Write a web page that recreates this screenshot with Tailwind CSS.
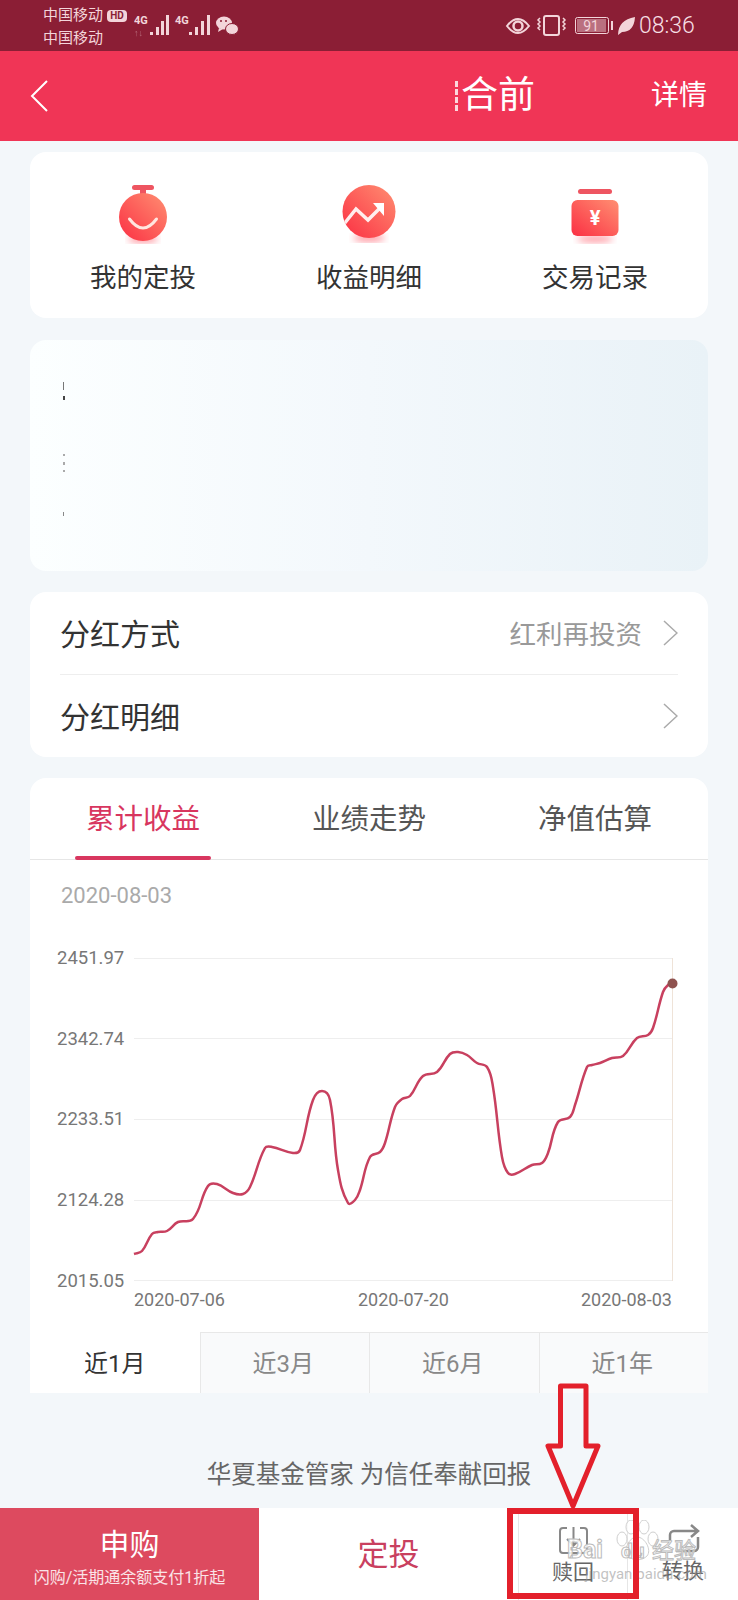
<!DOCTYPE html>
<html lang="zh-CN">

<head>
  <meta charset="UTF-8">
  <meta name="viewport" content="width=device-width, initial-scale=1.0">
  <title>基金详情</title>
  <script src="https://cdn.jsdelivr.net/npm/@tailwindcss/browser@4"></script>
</head>

<body class="bg-[#f3f7fa] font-['Roboto','Noto_Sans_CJK_SC',sans-serif] text-[#333333]">
  <div class="relative w-[738px] h-[1600px] overflow-hidden flex flex-col">

    <!-- status bar -->
    <div class="h-[51px] shrink-0 bg-[#8b1e35] flex items-center text-[#f3d5da] pl-[43px]">
      <div class="w-[84px] flex flex-col text-[15px] leading-[23px] pt-[3px]">
        <div class="flex items-center gap-[4px]">
          <span>中国移动</span>
          <span class="w-[20px] h-[12px] rounded-[4px] bg-[#f3d5da] text-[#8b1e35] text-[10px] leading-[12px] font-bold text-center">HD</span>
        </div>
        <span>中国移动</span>
      </div>
      <svg class="ml-[7px]" width="106" height="51" viewBox="134 0 106 51" fill="#f3d5da">
        <text x="134" y="24" font-size="11" font-weight="700" font-family="Roboto">4G</text>
        <text x="134" y="36" font-size="9" font-weight="700" font-family="Roboto" opacity="0.4">↑↓</text>
        <rect x="150" y="32" width="3" height="3" /><rect x="156" y="27" width="3" height="8" />
        <rect x="161" y="21" width="3" height="14" /><rect x="166" y="15" width="3" height="20" />
        <text x="175" y="24" font-size="11" font-weight="700" font-family="Roboto">4G</text>
        <rect x="189" y="32" width="3" height="3" /><rect x="195" y="27" width="3" height="8" />
        <rect x="201" y="21" width="3" height="14" /><rect x="207" y="15" width="3" height="20" />
        <ellipse cx="224" cy="23" rx="8" ry="6.500" /><path d="M219 28 l-1 4 5 -3z" />
        <ellipse cx="232" cy="29" rx="6.500" ry="5.500" stroke="#8b1e35" stroke-width="1" />
        <circle cx="221" cy="21" r="1" fill="#8b1e35" /><circle cx="226" cy="21" r="1" fill="#8b1e35" />
      </svg>
      <svg class="ml-auto" width="132" height="51" viewBox="505 0 132 51" fill="none" stroke="#f3d5da">
        <path d="M507 26 Q518 12 529 26 Q518 40 507 26Z" stroke-width="2" />
        <circle cx="518" cy="26" r="4.500" stroke-width="2.500" />
        <rect x="544" y="16" width="15" height="19" rx="2" stroke-width="2" />
        <path d="M540 18 l-2 2 2 2 -2 2 2 2 -2 2 2 2 M563 18 l2 2 -2 2 2 2 -2 2 2 2 -2 2" stroke-width="1.500" />
        <rect x="575.500" y="17.500" width="33" height="16" rx="2" stroke-width="1" />
        <rect x="577" y="19" width="29" height="13" fill="#f3d5da" fill-opacity="0.45" stroke="none" />
        <text x="591" y="31" text-anchor="middle" font-size="14" font-family="Roboto" fill="#f3d5da" stroke="none">91</text>
        <rect x="611" y="21" width="2" height="9" fill="#f3d5da" stroke="none" />
        <path d="M618 35 Q618 20 635 17 Q634 32 622 32 L618 35Z" fill="#f3d5da" stroke="none" />
      </svg>
      <span class="ml-[2px] mr-[43px] w-[56px] text-[23px] leading-[51px] font-light text-[#f6dfe3]">08:36</span>
    </div>

    <!-- header -->
    <div class="h-[90px] shrink-0 bg-[#f03556] flex items-center text-white">
      <svg class="ml-[30px]" width="18" height="32" viewBox="0 0 18 32" fill="none" stroke="#ffffff" stroke-width="2">
        <path d="M17 1 L2 16 L17 31" />
      </svg>
      <span class="ml-auto mr-[116px] flex items-center text-[37px] leading-[50px]">
        <span class="mr-[3px] w-[3px] h-[30px] border-l-[3px] border-dashed border-white/80"></span>合前
      </span>
      <span class="mr-[31px] text-[28px] leading-[40px]">详情</span>
    </div>

    <!-- shortcuts -->
    <div class="mt-[11px] mx-[30px] h-[166px] shrink-0 rounded-[16px] bg-white grid grid-cols-3 pt-[31px] text-[26.500px] leading-[36px] text-center">
      <div class="flex flex-col items-center">
        <svg width="70" height="66" viewBox="0 0 70 66">
          <defs>
            <linearGradient id="redGrad" x1="1" y1="0" x2="0" y2="1">
              <stop offset="0" stop-color="#ff8f72" />
              <stop offset="1" stop-color="#fb2f43" />
            </linearGradient>
            <filter id="soft"><feGaussianBlur stdDeviation="3.500" /></filter>
          </defs>
          <ellipse cx="35" cy="56" rx="15" ry="4" fill="#ff9aa3" filter="url(#soft)" />
          <rect x="24" y="2" width="22" height="5" rx="2.500" fill="#ee5561" />
          <rect x="32" y="7" width="6" height="5" fill="#ee5561" />
          <circle cx="35" cy="34" r="24" fill="url(#redGrad)" />
          <path d="M21.500 36 Q35 54 48.500 36" fill="none" stroke="#ffe6df" stroke-width="3" stroke-linecap="round" />
        </svg>
        <span class="mt-[11px]">我的定投</span>
      </div>
      <div class="flex flex-col items-center">
        <svg width="70" height="66" viewBox="0 0 70 66">
          <defs>
            <clipPath id="ball"><circle cx="35" cy="28.500" r="26.500" /></clipPath>
          </defs>
          <ellipse cx="35" cy="55" rx="16" ry="4" fill="#ff9aa3" filter="url(#soft)" />
          <circle cx="35" cy="28.500" r="26.500" fill="url(#redGrad)" />
          <g clip-path="url(#ball)">
            <path d="M10 41 L22 26 L34 37 L46 25" fill="none" stroke="#ffffff" stroke-opacity="0.9" stroke-width="3.500" />
            <polygon points="39,20 50,20 50,33" fill="#ffffff" />
          </g>
        </svg>
        <span class="mt-[11px]">收益明细</span>
      </div>
      <div class="flex flex-col items-center">
        <svg width="70" height="66" viewBox="0 0 70 66">
          <ellipse cx="35" cy="56" rx="18" ry="3.500" fill="#ff9aa3" filter="url(#soft)" />
          <rect x="18" y="6" width="34" height="5" rx="2.500" fill="#ee5561" />
          <rect x="11.500" y="17" width="47" height="36" rx="6" fill="url(#redGrad)" />
          <text x="35" y="42" text-anchor="middle" font-size="20" font-weight="700" font-family="Roboto" fill="#ffffff">¥</text>
        </svg>
        <span class="mt-[11px]">交易记录</span>
      </div>
    </div>

    <!-- blanked out holdings card -->
    <div class="mt-[22px] mx-[30px] h-[231px] shrink-0 rounded-[16px] bg-linear-to-r from-[#fcffff] via-[#f3f8fc] to-[#e9f2f7] pt-[42px] pl-[33px] flex flex-col items-start">
      <div class="w-[1px] h-[8px] bg-[#777777]"></div>
      <div class="mt-[6px] w-[2px] h-[4px] bg-[#444444]"></div>
      <div class="mt-[54px] w-[2px] h-[2px] bg-[#aaaaaa]"></div>
      <div class="mt-[6px] w-[2px] h-[3px] bg-[#aaaaaa]"></div>
      <div class="mt-[5px] w-[2px] h-[2px] bg-[#aaaaaa]"></div>
      <div class="mt-[40px] w-[1px] h-[4px] bg-[#888888]"></div>
    </div>

    <!-- dividend rows -->
    <div class="mt-[21px] mx-[30px] h-[165px] shrink-0 rounded-[16px] bg-white px-[30px] text-[30px]">
      <div class="h-[83px] pt-[3px] border-b border-[#eeeeee] flex items-center">
        <span>分红方式</span>
        <span class="ml-auto text-[26.500px] text-[#999999]">红利再投资</span>
        <svg class="ml-[21px] -mt-[3px]" width="15" height="26" viewBox="0 0 15 26" fill="none" stroke="#aaaaaa" stroke-width="1.500">
          <path d="M1 1 L14 13 L1 25" />
        </svg>
      </div>
      <div class="h-[82px] pt-[3px] flex items-center">
        <span>分红明细</span>
        <svg class="ml-auto -mt-[3px]" width="15" height="26" viewBox="0 0 15 26" fill="none" stroke="#aaaaaa" stroke-width="1.500">
          <path d="M1 1 L14 13 L1 25" />
        </svg>
      </div>
    </div>

    <!-- chart card -->
    <div class="mt-[21px] mx-[30px] h-[615px] shrink-0 rounded-t-[16px] bg-white flex flex-col">
      <div class="h-[82px] shrink-0 border-b border-[#e6e6e6] grid grid-cols-3 text-[28.500px] text-center text-[#555555]">
        <div class="relative flex items-center justify-center pt-[4px] text-[#d8365f]">
          累计收益
          <div class="absolute left-[45px] bottom-[-1px] w-[136px] h-[4px] rounded-[2px] bg-[#d8365f]"></div>
        </div>
        <div class="flex items-center justify-center pt-[4px]">业绩走势</div>
        <div class="flex items-center justify-center pt-[4px]">净值估算</div>
      </div>
      <div class="h-[60px] shrink-0 pl-[31px] pt-[21px] text-[22px] leading-[30px] text-[#aaaaaa]">2020-08-03</div>
      <svg class="block shrink-0" width="677" height="412" viewBox="30 920 677 412" fill="#777777" font-family="Roboto" font-size="18.500">
        <g stroke="#eeeeee" stroke-width="1">
          <line x1="134" y1="958.500" x2="672" y2="958.500" />
          <line x1="134" y1="1038.500" x2="672" y2="1038.500" />
          <line x1="134" y1="1119.500" x2="672" y2="1119.500" />
          <line x1="134" y1="1200.500" x2="672" y2="1200.500" />
          <line x1="134" y1="1280.500" x2="672" y2="1280.500" />
        </g>
        <line x1="672.500" y1="958" x2="672.500" y2="1281" stroke="#efe3d8" stroke-width="1" />
        <text x="57" y="964">2451.97</text>
        <text x="57" y="1045">2342.74</text>
        <text x="57" y="1125">2233.51</text>
        <text x="57" y="1206">2124.28</text>
        <text x="57" y="1287">2015.05</text>
        <text x="134" y="1306" font-size="18">2020-07-06</text>
        <text x="358" y="1306" font-size="18">2020-07-20</text>
        <text x="581" y="1306" font-size="18">2020-08-03</text>
        <path id="curve" fill="none" stroke="#c8405f" stroke-width="2.500" />
        <circle cx="672.500" cy="983.500" r="5" fill="#8f524f" />
      </svg>
      <div class="h-[61px] shrink-0 grid grid-cols-4 text-[24px] text-center text-[#888888]">
        <div class="flex items-center justify-center pt-[2px] bg-white text-[#333333]">近1月</div>
        <div class="flex items-center justify-center pt-[2px] pr-[3px] bg-[#f9fafb] border-t border-l border-[#e8e8e8]">近3月</div>
        <div class="flex items-center justify-center pt-[2px] pr-[3px] bg-[#f9fafb] border-t border-l border-[#e8e8e8]">近6月</div>
        <div class="flex items-center justify-center pt-[2px] pr-[3px] bg-[#f9fafb] border-t border-l border-[#e8e8e8]">近1年</div>
      </div>
    </div>

    <!-- slogan -->
    <div class="flex-1 flex items-end justify-center pb-[15px] text-[24.500px] leading-[36px] text-[#666666]">华夏基金管家 为信任奉献回报</div>

    <!-- bottom bar -->
    <div class="h-[92px] shrink-0 bg-white flex">
      <div class="w-[259px] bg-[#dd4a5f] text-white flex flex-col items-center">
        <span class="mt-[16px] text-[30px] leading-[42px]">申购</span>
        <span class="text-[16px] leading-[24px] text-white/85">闪购/活期通余额支付1折起</span>
      </div>
      <div class="w-[259px] flex items-center justify-center pt-[3px] text-[31px] text-[#c9405f]">定投</div>
      <div class="w-[110px] border-l border-r border-[#e6e6e6] flex flex-col items-center text-[21px] leading-[30px] text-[#666666]">
        <svg class="mt-[18px]" width="31" height="29" viewBox="0 0 31 29" fill="none" stroke="#888888" stroke-width="2">
          <path d="M9 2 H5 a3 3 0 0 0 -3 3 V24 a3 3 0 0 0 3 3 H26 a3 3 0 0 0 3 -3 V5 a3 3 0 0 0 -3 -3 H22" />
          <path d="M15.500 1 V19 M9 13 L15.500 19.500 L22 13" />
        </svg>
        <span class="mt-[2px]">赎回</span>
      </div>
      <div class="flex-1 flex flex-col items-center text-[21px] leading-[30px] text-[#666666]">
        <svg class="mt-[16px]" width="33" height="30" viewBox="0 0 33 30" fill="none" stroke="#888888" stroke-width="2.500">
          <path d="M3 17 V11 a4 4 0 0 1 4 -4 H31 M24 1 L31 7 L24 13" />
          <path d="M31 13 V23 a4 4 0 0 1 -4 4 H9" />
        </svg>
        <span class="mt-[2px]">转换</span>
      </div>
    </div>

    <!-- baidu watermark -->
    <div class="absolute left-[567px] top-[1520px] w-[140px] h-[66px] text-white">
      <svg class="absolute left-[48px] top-0" width="44" height="42" viewBox="0 0 44 42" fill="#ffffff" fill-opacity="0.75" stroke="#cfcfcf" stroke-width="1">
        <ellipse cx="7" cy="19" rx="5" ry="7" />
        <ellipse cx="16" cy="7" rx="5" ry="7" />
        <ellipse cx="29" cy="7" rx="5" ry="7" />
        <ellipse cx="38" cy="19" rx="5" ry="7" />
        <path d="M22 17 C14 17 8 30 13 36 C18 41 27 41 32 36 C37 30 30 17 22 17Z" />
      </svg>
      <span class="absolute left-0 top-[15px] text-[25px] leading-[30px] font-bold text-white/85 [-webkit-text-stroke:1px_#bbbbbb]">Bai</span>
      <span class="absolute left-[54px] top-[18px] text-[21px] leading-[26px] font-bold text-white/85 [-webkit-text-stroke:1px_#bbbbbb]">du</span>
      <span class="absolute left-[85px] top-[17px] text-[22px] leading-[28px] text-white/85 [-webkit-text-stroke:1px_#bbbbbb]">经验</span>
      <span class="absolute left-[18px] top-[44px] text-[15px] leading-[20px] text-[#999999]/60">jingyan.baidu.com</span>
    </div>

    <!-- red annotation drawn over the shot -->
    <svg class="absolute left-[500px] top-[1380px]" width="150" height="222" viewBox="500 1380 150 222" fill="none" stroke="#e3202b">
      <path d="M560.500 1386 H586 V1446 H598 L573 1506 L548 1446 H560.500Z" stroke-width="5" stroke-linejoin="round" />
      <rect x="510" y="1511" width="126" height="85" stroke-width="6" />
    </svg>
  </div>

  <script>
    // points read off the chart, smoothed with handles scaled to each segment
    const pts = [[134,1254],[142,1251],[152,1234],[158,1232],[167,1231],[178,1222],[193,1219],[208,1186],[217,1184],[233,1193],[243,1194],[250,1187],[265,1148],[272,1147],[293,1153],[300,1150],[313,1100],[322,1091],[330,1100],[338,1170],[348,1203],[355,1200],[360,1190],[370,1157],[380,1152],[385,1143],[395,1107],[402,1099],[410,1096],[423,1076],[437,1072],[450,1054],[458,1052],[467,1055],[477,1063],[487,1067],[493,1087],[502,1157],[508,1173],[515,1174],[532,1165],[542,1163],[548,1153],[558,1122],[570,1117],[575,1105],[587,1067],[592,1065],[600,1063],[612,1058],[623,1056],[637,1038],[648,1035],[653,1028],[663,992],[668,985],[672,984]];

    function tangent(i) {
      const a = pts[i - 1] || pts[i];
      const b = pts[i + 1] || pts[i];
      const len = Math.hypot(b[0] - a[0], b[1] - a[1]);
      return [(b[0] - a[0]) / len, (b[1] - a[1]) / len];
    }

    let d = `M${pts[0][0]} ${pts[0][1]}`;
    for (let i = 0; i < pts.length - 1; i++) {
      const p1 = pts[i];
      const p2 = pts[i + 1];
      const h = Math.hypot(p2[0] - p1[0], p2[1] - p1[1]) * 0.38;
      const t1 = tangent(i);
      const t2 = tangent(i + 1);
      d += ` C${p1[0] + t1[0] * h} ${p1[1] + t1[1] * h} ${p2[0] - t2[0] * h} ${p2[1] - t2[1] * h} ${p2[0]} ${p2[1]}`;
    }
    document.querySelector("#curve").setAttribute("d", d);
  </script>
</body>

</html>
